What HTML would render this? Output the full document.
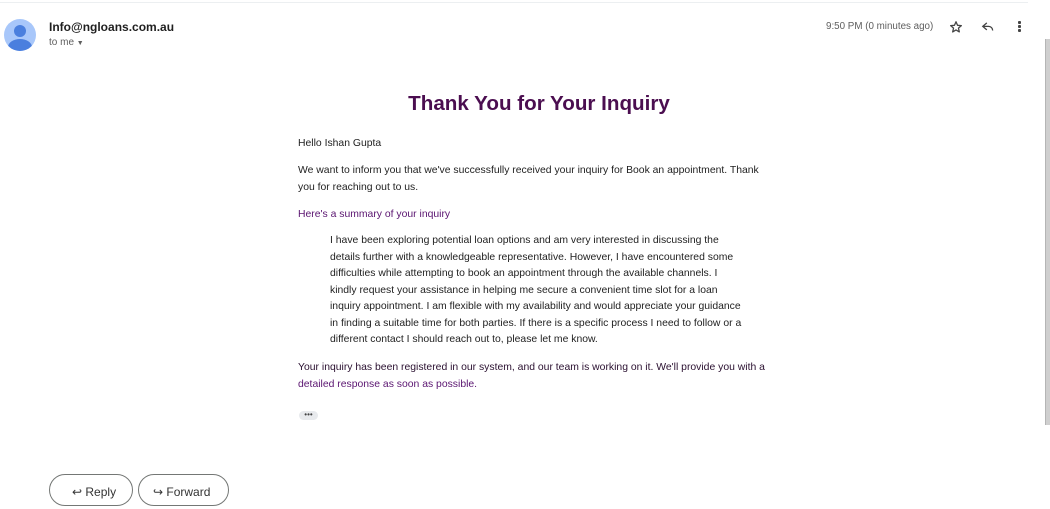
<!DOCTYPE html>
<html><head><meta charset="utf-8"><style>
body{margin:0;width:1050px;height:486px;overflow:hidden;background:#fff;font-family:"Liberation Sans",Arial,sans-serif;position:relative}
.abs{position:absolute}
.t{position:absolute;left:298px;font-size:10.4px;color:#222;line-height:17px;white-space:nowrap}
.q{position:absolute;left:330px;font-size:10.4px;color:#222;line-height:16.5px;white-space:nowrap}
</style></head><body>
<div class="abs" style="left:0;top:2px;width:1028px;height:1px;background:#eceff1"></div>
<div class="abs" style="left:4px;top:19px;width:32px;height:32px;border-radius:50%;background:#a8c7fa;overflow:hidden">
 <div class="abs" style="left:10px;top:6px;width:12px;height:12px;border-radius:50%;background:#4a7fde"></div>
 <div class="abs" style="left:4px;top:20px;width:24px;height:16px;border-radius:50% 50% 0 0;background:#4a7fde"></div>
</div>
<div class="abs" style="left:49px;top:20px;font-size:12px;font-weight:bold;color:#1f1f1f">Info@ngloans.com.au</div>
<div class="abs" style="left:49px;top:37px;font-size:10px;color:#5e5e5e">to me <span style="font-size:7px">▼</span></div>
<div class="abs" style="left:826px;top:21px;font-size:9.8px;color:#5e5e5e">9:50 PM (0 minutes ago)</div>
<svg class="abs" style="left:949px;top:20px" width="14" height="14" viewBox="0 0 24 24"><path d="M12 3l2.6 6.1 6.6.5-5 4.3 1.5 6.5L12 17l-5.7 3.4 1.5-6.5-5-4.3 6.6-.5z" fill="none" stroke="#444" stroke-width="2.2" stroke-linejoin="round"/></svg>
<svg class="abs" style="left:981px;top:20px" width="14" height="14" viewBox="0 0 24 24"><path d="M10 5L3 11l7 6M3 11h10c4 0 7 3 7 7" fill="none" stroke="#444" stroke-width="2.2"/></svg>
<div class="abs" style="left:1018px;top:21px;width:3px;height:3px;background:#444;border-radius:1px;box-shadow:0 4px 0 #444,0 8px 0 #444"></div>
<div class="abs" style="left:1045px;top:39px;width:5px;height:386px;background:#cfcfcf;border-left:1px solid #b5b5b5"></div>
<div class="abs" style="left:280px;width:518px;top:92px;text-align:center;font-size:20.6px;font-weight:bold;color:#4b0e50">Thank You for Your Inquiry</div>
<div class="t" style="top:135px">Hello Ishan Gupta</div>
<div class="t" style="top:162px">We want to inform you that we've successfully received your inquiry for Book an appointment. Thank<br>you for reaching out to us.</div>
<div class="t" style="top:206px;color:#5a1470">Here's a summary of your inquiry</div>
<div class="q" style="top:233px">I have been exploring potential loan options and am very interested in discussing the<br>details further with a knowledgeable representative. However, I have encountered some<br>difficulties while attempting to book an appointment through the available channels. I<br>kindly request your assistance in helping me secure a convenient time slot for a loan<br>inquiry appointment. I am flexible with my availability and would appreciate your guidance<br>in finding a suitable time for both parties. If there is a specific process I need to follow or a<br>different contact I should reach out to, please let me know.</div>
<div class="t" style="top:359px;color:#2a1030">Your inquiry has been registered in our system, and our team is working on it. We'll provide you with a<br><span style="color:#5a1470">detailed response as soon as possible.</span></div>
<div class="abs" style="left:299px;top:411px;width:19px;height:9px;border-radius:5px;background:#e8eaed;font-size:8px;line-height:7px;text-align:center;color:#444">•••</div>
<div class="abs" style="left:49px;top:474px;width:82px;height:30px;border:1px solid #747775;border-radius:16px;font-size:12px;color:#333;text-indent:22px;line-height:34px">↩ Reply</div>
<div class="abs" style="left:138px;top:474px;width:89px;height:30px;border:1px solid #747775;border-radius:16px;font-size:12px;color:#333;text-indent:14px;line-height:34px">↪ Forward</div>
</body></html>
